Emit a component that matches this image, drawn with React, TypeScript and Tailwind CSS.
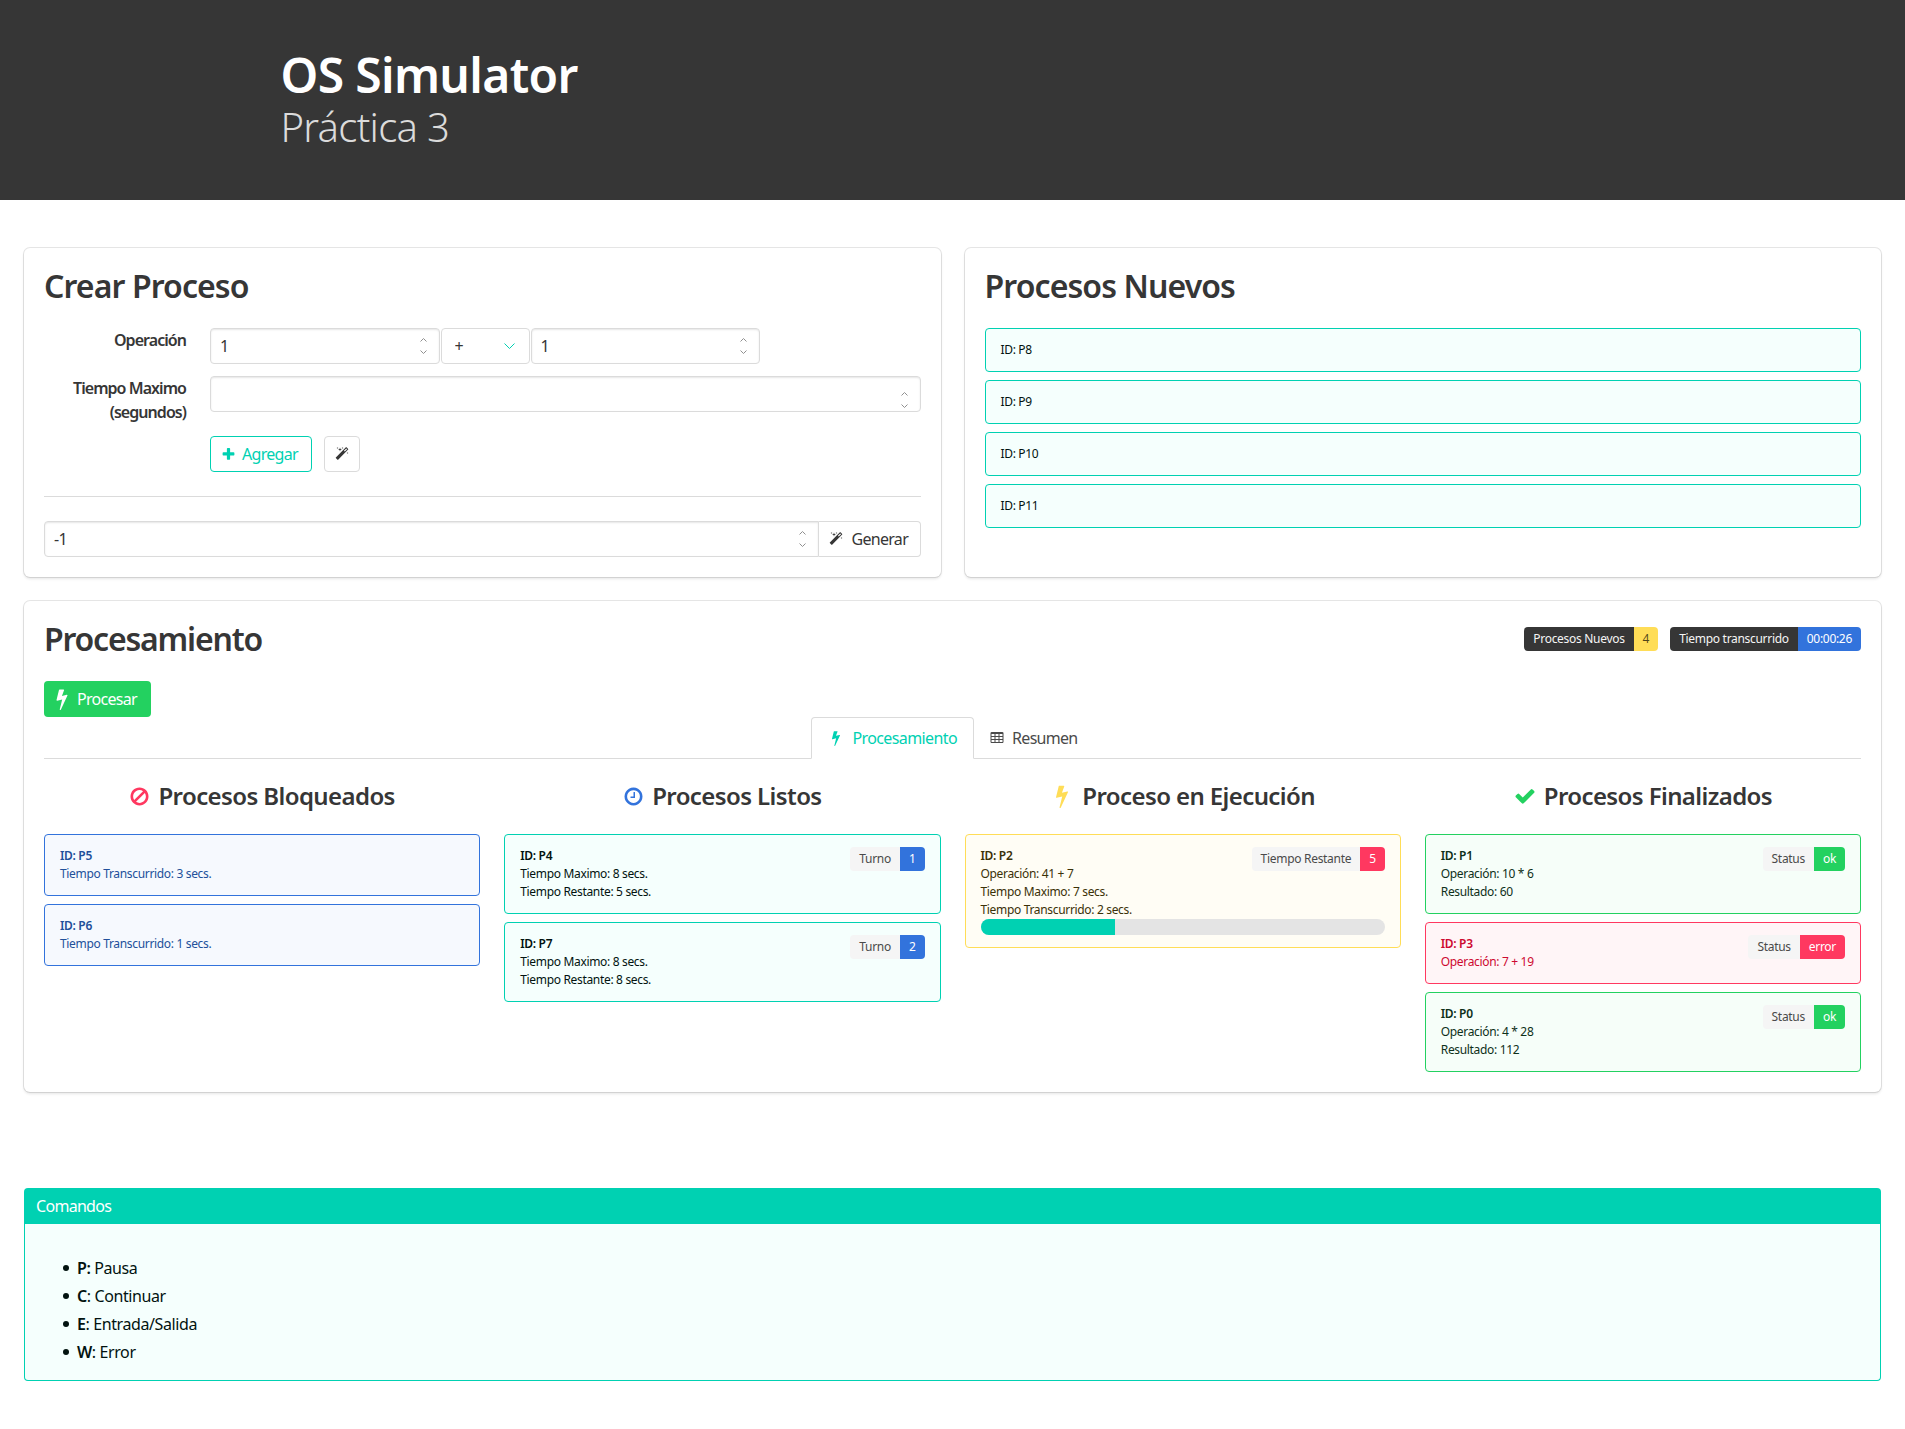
import React from "react";

const ICONS = {
  bolt: "M1333 566q18 20 7 44l-540 1157q-13 25-42 25-4 0-14-2-17-5-25.5-19t-4.5-30l197-808-406 101q-4 1-12 1-18 0-31-11-18-15-13-39l201-825q4-14 16-23t28-9h328q19 0 32 12.5t13 29.5q0 8-5 18l-171 463 396-98q8-2 12-2 19 0 34 15z",
  magic: "M1254 581l293-293-107-107-293 293zm447-293q0 27-18 45l-1286 1286q-18 18-45 18t-45-18l-198-198q-18-18-18-45t18-45l1286-1286q18-18 45-18t45 18l198 198q18 18 18 45zm-1351-190l98 30-98 30-30 98-30-98-98-30 98-30 30-98zm350 162l196 60-196 60-60 196-60-196-196-60 196-60 60-196zm930 478l98 30-98 30-30 98-30-98-98-30 98-30 30-98zm-640-640l98 30-98 30-30 98-30-98-98-30 98-30 30-98z",
  plus: "M1600 736v192q0 40-28 68t-68 28h-416v416q0 40-28 68t-68 28h-192q-40 0-68-28t-28-68v-416h-416q-40 0-68-28t-28-68v-192q0-40 28-68t68-28h416v-416q0-40 28-68t68-28h192q40 0 68 28t28 68v416h416q40 0 68 28t28 68z",
  check: "M1671 566q0 40-28 68l-724 724-136 136q-28 28-68 28t-68-28l-136-136-362-362q-28-28-28-68t28-68l136-136q28-28 68-28t68 28l294 295 656-657q28-28 68-28t68 28l136 136q28 28 28 68z",
  ban: "M1440 893q0-161-87-295l-754 753q137 89 297 89 111 0 211.5-43.5t173.5-116.5 116-174.5 43-212.5zm-999 299l755-754q-135-91-300-91-148 0-273 73t-198 199-73 274q0 162 89 299zm1223-299q0 157-61 300t-163.5 246-245 164-298.5 61-298.5-61-245-164-163.5-246-61-300 61-299.5 163.5-245.5 245-164 298.5-61 298.5 61 245 164 163.5 245.5 61 299.5z",
  clock: "M1024 544v448q0 14-9 23t-23 9h-320q-14 0-23-9t-9-23v-64q0-14 9-23t23-9h224v-352q0-14 9-23t23-9h64q14 0 23 9t9 23zm416 352q0-148-73-273t-198-198-273-73-273 73-198 198-73 273 73 273 198 198 273 73 273-73 198-198 73-273zm224 0q0 209-103 385.5t-279.5 279.5-385.5 103-385.5-103-279.5-279.5-103-385.5 103-385.5 279.5-279.5 385.5-103 385.5 103 279.5 279.5 103 385.5z",
  table: "M576 1376v-192q0-14-9-23t-23-9h-320q-14 0-23 9t-9 23v192q0 14 9 23t23 9h320q14 0 23-9t9-23zm0-384v-192q0-14-9-23t-23-9h-320q-14 0-23 9t-9 23v192q0 14 9 23t23 9h320q14 0 23-9t9-23zm512 384v-192q0-14-9-23t-23-9h-320q-14 0-23 9t-9 23v192q0 14 9 23t23 9h320q14 0 23-9t9-23zm-512-768v-192q0-14-9-23t-23-9h-320q-14 0-23 9t-9 23v192q0 14 9 23t23 9h320q14 0 23-9t9-23zm512 384v-192q0-14-9-23t-23-9h-320q-14 0-23 9t-9 23v192q0 14 9 23t23 9h320q14 0 23-9t9-23zm512 384v-192q0-14-9-23t-23-9h-320q-14 0-23 9t-9 23v192q0 14 9 23t23 9h320q14 0 23-9t9-23zm-512-768v-192q0-14-9-23t-23-9h-320q-14 0-23 9t-9 23v192q0 14 9 23t23 9h320q14 0 23-9t9-23zm512 384v-192q0-14-9-23t-23-9h-320q-14 0-23 9t-9 23v192q0 14 9 23t23 9h320q14 0 23-9t9-23zm0-384v-192q0-14-9-23t-23-9h-320q-14 0-23 9t-9 23v192q0 14 9 23t23 9h320q14 0 23-9t9-23zm128-320v1088q0 66-47 113t-113 47h-1344q-66 0-113-47t-47-113v-1088q0-66 47-113t113-47h1344q66 0 113 47t47 113z",
};

function Icon({ name, className }: { name: keyof typeof ICONS; className: string }) {
  return (
    <svg viewBox="0 0 1792 1792" fill="currentColor" className={`shrink-0 ${className}`}>
      <path d={ICONS[name]} />
    </svg>
  );
}

const BOX = "rounded-md bg-white p-5 shadow-[0_2px_3px_rgba(10,10,10,0.1),0_0_0_1px_rgba(10,10,10,0.1)]";
const TITLE = "text-[32px] leading-[36px] font-semibold text-[#363636] tracking-[-0.9px]";
const LABEL = "mr-6 w-[142px] shrink-0 text-right leading-6 font-semibold tracking-[-0.95px] text-[#363636]";

// the little spin arrows of a number input
function Spinner() {
  return (
    <svg viewBox="0 0 7 17" fill="none" stroke="#909090" strokeWidth="1" className="absolute top-1/2 right-[13px] h-[17px] w-[7px] -translate-y-1/2">
      <path d="M.5 4 3.5 1l3 3M.5 13l3 3 3-3" />
    </svg>
  );
}

function NumberInput({ value, rounded, className }: { value: string; rounded: string; className: string }) {
  return (
    <div className={`relative ${className}`}>
      <input
        readOnly
        value={value}
        className={`h-9 w-full border border-[#dbdbdb] bg-white pl-[9px] text-[#363636] shadow-[inset_0_1px_2px_rgba(10,10,10,0.1)] outline-none ${rounded}`}
      />
      <Spinner />
    </div>
  );
}

function Tag({ label, value, valueClass, labelClass }: { label: string; value: string; valueClass: string; labelClass: string }) {
  return (
    <div className="flex h-6 shrink-0 overflow-hidden rounded text-xs leading-6 tracking-[-0.3px]">
      <span className={`px-[9px] ${labelClass}`}>{label}</span>
      <span className={`px-[9px] ${valueClass}`}>{value}</span>
    </div>
  );
}

const TONES = {
  primary: "border-[#00d1b2] bg-[#f5fffd] text-[#021310]",
  link: "border-[#3273dc] bg-[#f6f9fe] text-[#22509a]",
  warning: "border-[#ffdd57] bg-[#fffdf5] text-[#3b3108]",
  success: "border-[#23d160] bg-[#f6fef9] text-[#0e301a]",
  danger: "border-[#ff3860] bg-[#fff5f7] text-[#cd0930]",
};

type Badge = { label: string; value: string; color: string };

function Card({ tone, id, lines, badge, children }: { tone: keyof typeof TONES; id: string; lines?: string[]; badge?: Badge; children?: React.ReactNode }) {
  return (
    <div className={`rounded border px-[15px] py-3 text-xs leading-[18px] tracking-[-0.33px] ${TONES[tone]}`}>
      <div className="flex items-start justify-between">
        <div>
          {/* new processes only show a plain id line */}
          <div className={lines ? "font-semibold" : ""}>ID: {id}</div>
          {lines?.map((l) => (
            <div key={l}>{l}</div>
          ))}
        </div>
        {badge && <Tag label={badge.label} value={badge.value} labelClass="bg-[#f5f5f5] text-[#4a4a4a]" valueClass={badge.color} />}
      </div>
      {children}
    </div>
  );
}

function ColumnHead({ icon, color, size, children }: { icon: keyof typeof ICONS; color: string; size: string; children: string }) {
  return (
    <h3 className="mt-[22px] mb-[23px] flex items-center justify-center gap-2 text-2xl leading-[30px] font-semibold tracking-[-0.6px] text-[#363636]">
      <Icon name={icon} className={`${color} ${size}`} />
      {children}
    </h3>
  );
}

const TURN = "bg-[#3273dc] text-white";
const OK = "bg-[#23d160] text-white";

const COMMANDS = [
  ["P:", " Pausa"],
  ["C", ": Continuar"],
  ["E", ": Entrada/Salida"],
  ["W", ": Error"],
];

export default function App() {
  return (
    <div className="font-['Noto_Sans',sans-serif] text-base tracking-[-0.7px] text-[#4a4a4a]">
      <section className="bg-[#363636] py-12">
        <div className="mx-auto w-[1344px]">
          <h1 className="text-5xl leading-[54px] font-semibold tracking-[-0.65px] text-white">OS Simulator</h1>
          <h2 className="text-[40px] leading-[50px] font-light tracking-[-0.7px] text-[#dbdbdb]">Práctica 3</h2>
        </div>
      </section>

      <main className="px-6 pt-12 pb-12">
        <div className="grid grid-cols-2 gap-6">
          <div className={BOX}>
            <h2 className={`${TITLE} mb-6`}>Crear Proceso</h2>

            <div className="mb-3 flex">
              <label className={LABEL}>Operación</label>
              <div className="flex w-[550px] gap-px">
                <NumberInput value="1" rounded="rounded" className="w-[229.5px]" />
                <div className="relative w-[89px]">
                  <select className="h-9 w-full appearance-none rounded border border-[#dbdbdb] bg-white pl-[13px] text-[#363636] outline-none">
                    <option>+</option>
                  </select>
                  <svg viewBox="0 0 11 6" fill="none" stroke="#00d1b2" strokeWidth="1" className="absolute top-[15px] right-[15px] h-[6px] w-[11px]">
                    <path d="M.5.5 5.5 5.5l5-5" />
                  </svg>
                </div>
                <NumberInput value="1" rounded="rounded" className="flex-1" />
              </div>
            </div>

            <div className="mb-3 flex">
              <label className={LABEL}>Tiempo Maximo (segundos)</label>
              <NumberInput value="" rounded="rounded" className="flex-1" />
            </div>

            <div className="ml-[166px] flex gap-3">
              <button className="flex h-9 w-[102px] items-center gap-[6px] rounded border border-[#00d1b2] bg-white pl-[10px] text-[#00d1b2]">
                <Icon name="plus" className="h-[15px] w-[15px]" />
                Agregar
              </button>
              <button className="flex h-9 w-9 items-center justify-center rounded border border-[#dbdbdb] bg-white text-[#363636]">
                <Icon name="magic" className="h-[14px] w-[14px]" />
              </button>
            </div>

            <hr className="my-6 border-t border-[#dbdbdb]" />

            <div className="flex">
              <NumberInput value="-1" rounded="rounded-l" className="flex-1" />
              <button className="flex h-9 w-[102px] items-center gap-[9px] rounded-r border border-l-0 border-[#dbdbdb] bg-white pl-[10px] text-[#363636]">
                <Icon name="magic" className="h-[14px] w-[14px]" />
                Generar
              </button>
            </div>
          </div>

          <div className={BOX}>
            <h2 className={`${TITLE} mb-6`}>Procesos Nuevos</h2>
            <div className="flex flex-col gap-2">
              <Card tone="primary" id="P8" />
              <Card tone="primary" id="P9" />
              <Card tone="primary" id="P10" />
              <Card tone="primary" id="P11" />
            </div>
          </div>
        </div>

        <div className={`${BOX} mt-6`}>
          <div className="flex items-center justify-between">
            <h2 className={`${TITLE} tracking-[-1.2px]`}>Procesamiento</h2>
            <div className="flex gap-3">
              <Tag label="Procesos Nuevos" value="4" labelClass="bg-[#363636] text-[#f5f5f5]" valueClass="bg-[#ffdd57] text-black/70" />
              <Tag label="Tiempo transcurrido" value="00:00:26" labelClass="bg-[#363636] text-[#f5f5f5]" valueClass="bg-[#3273dc] text-white" />
            </div>
          </div>

          <button className="mt-6 flex h-9 w-[107px] items-center gap-1 rounded bg-[#23d160] pl-[7px] text-white">
            <Icon name="bolt" className="h-[22px] w-[22px]" />
            Procesar
          </button>

          <div className="flex justify-center border-b border-[#dbdbdb]">
            <div className="-mb-px flex h-[42px] items-center gap-2 rounded-t border border-[#dbdbdb] border-b-white bg-white px-4 tracking-[-0.6px] text-[#00d1b2]">
              <Icon name="bolt" className="h-4 w-4" />
              Procesamiento
            </div>
            <div className="flex h-[41px] items-center gap-2 px-4 text-[#4a4a4a]">
              <Icon name="table" className="h-[14px] w-[14px]" />
              Resumen
            </div>
          </div>

          <div className="grid grid-cols-4 gap-6">
            <div>
              <ColumnHead icon="ban" color="text-[#ff3860]" size="h-[21px] w-[21px]">Procesos Bloqueados</ColumnHead>
              <div className="flex flex-col gap-2">
                <Card tone="link" id="P5" lines={["Tiempo Transcurrido: 3 secs."]} />
                <Card tone="link" id="P6" lines={["Tiempo Transcurrido: 1 secs."]} />
              </div>
            </div>

            <div>
              <ColumnHead icon="clock" color="text-[#3273dc]" size="h-[21px] w-[21px]">Procesos Listos</ColumnHead>
              <div className="flex flex-col gap-2">
                <Card tone="primary" id="P4" lines={["Tiempo Maximo: 8 secs.", "Tiempo Restante: 5 secs."]} badge={{ label: "Turno", value: "1", color: TURN }} />
                <Card tone="primary" id="P7" lines={["Tiempo Maximo: 8 secs.", "Tiempo Restante: 8 secs."]} badge={{ label: "Turno", value: "2", color: TURN }} />
              </div>
            </div>

            <div>
              <ColumnHead icon="bolt" color="text-[#ffdd57]" size="h-6 w-6">Proceso en Ejecución</ColumnHead>
              <Card
                tone="warning"
                id="P2"
                lines={["Operación: 41 + 7", "Tiempo Maximo: 7 secs.", "Tiempo Transcurrido: 2 secs."]}
                badge={{ label: "Tiempo Restante", value: "5", color: "bg-[#ff3860] text-white" }}
              >
                <div className="h-4 overflow-hidden rounded-full bg-[#e4e4e4]">
                  <div className="h-full w-1/3 bg-[#00d1b2]" />
                </div>
              </Card>
            </div>

            <div>
              <ColumnHead icon="check" color="text-[#23d160]" size="h-[22px] w-[22px]">Procesos Finalizados</ColumnHead>
              <div className="flex flex-col gap-2">
                <Card tone="success" id="P1" lines={["Operación: 10 * 6", "Resultado: 60"]} badge={{ label: "Status", value: "ok", color: OK }} />
                <Card tone="danger" id="P3" lines={["Operación: 7 + 19"]} badge={{ label: "Status", value: "error", color: "bg-[#ff3860] text-white" }} />
                <Card tone="success" id="P0" lines={["Operación: 4 * 28", "Resultado: 112"]} badge={{ label: "Status", value: "ok", color: OK }} />
              </div>
            </div>
          </div>
        </div>

        <div className="mt-24 rounded">
          <div className="rounded-t bg-[#00d1b2] px-3 py-1.5 leading-6 text-white">Comandos</div>
          <ul className="flex flex-col gap-1 rounded-b border border-t-0 border-[#00d1b2] bg-[#f5fffd] pt-[32px] pb-[16px] pl-[38px] tracking-[-0.4px] text-[#021310]">
            {COMMANDS.map(([key, text]) => (
              <li key={key} className="flex items-center gap-2">
                <span className="h-[6px] w-[6px] rounded-full bg-[#021310]" />
                <span className="whitespace-pre">
                  <strong className="font-semibold">{key}</strong>
                  {text}
                </span>
              </li>
            ))}
          </ul>
        </div>
      </main>
    </div>
  );
}
